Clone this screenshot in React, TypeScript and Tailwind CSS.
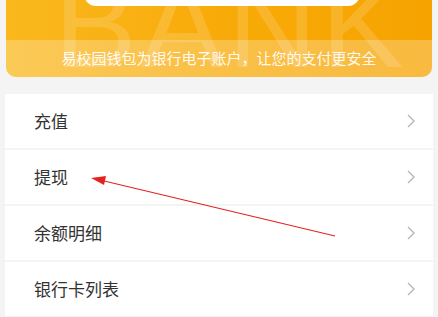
const items = ["充值", "提现", "余额明细", "银行卡列表"];

function Chevron() {
  return (
    <svg width="10" height="16" viewBox="0 0 10 16" fill="none">
      <path d="M2 2 L8 8 L2 14" stroke="#b3b3b3" strokeWidth="1.3" />
    </svg>
  );
}

export default function App() {
  return (
    <div
      className="relative w-[438px] h-[317px] overflow-hidden bg-[#f4f4f4]"
      style={{ fontFamily: '"Noto Sans CJK SC", "Noto Sans", sans-serif' }}
    >
      {/* wallet card */}
      <div className="relative mx-[6px] -mt-[20px] h-[97px] rounded-[10px] overflow-hidden bg-gradient-to-r from-[#fab81d] via-[#f8ab08] to-[#f6a300]">
        <div className="absolute left-[48px] top-[-18px] text-[124px] leading-none tracking-[4px] text-white/15 select-none"
          style={{ fontFamily: '"Liberation Sans", Arial, sans-serif' }}>
          BANK
        </div>
        <div className="relative mx-auto ml-[78px] w-[276px] h-[26px] rounded-[12px] bg-white" />
        <div className="absolute left-0 right-0 bottom-0 h-[37px] bg-white/25 flex items-center justify-center">
          <span className="text-[15px] text-white/95">易校园钱包为银行电子账户，让您的支付更安全</span>
        </div>
      </div>

      {/* menu list */}
      <div className="mx-[5px] mt-[17px] flex flex-col gap-[2px]">
        {items.map((t) => (
          <div key={t} className="h-[54px] bg-white flex items-center justify-between pl-[29px] pr-[17px]">
            <span className="text-[17px] text-[#333333]">{t}</span>
            <Chevron />
          </div>
        ))}
      </div>

      {/* red annotation arrow */}
      <svg className="absolute left-0 top-0 pointer-events-none" width="438" height="317">
        <line x1="335" y1="236" x2="100" y2="180" stroke="#e52222" strokeWidth="1.2" />
        <polygon points="91,178 106,176 104,185" fill="#e52222" />
      </svg>
    </div>
  );
}
